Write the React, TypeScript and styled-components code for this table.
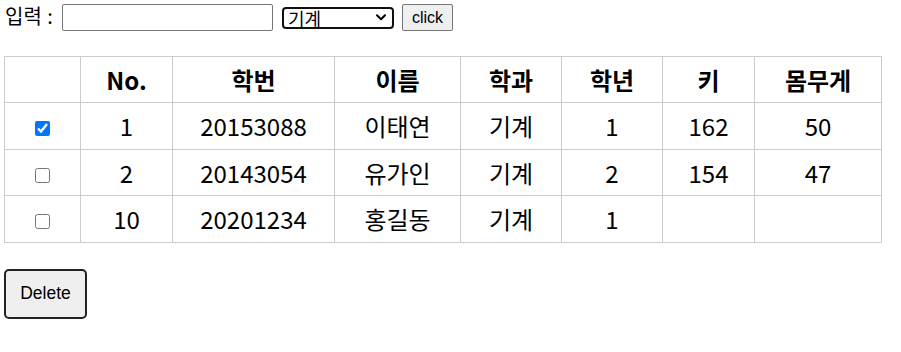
import React, { useState } from "react";
import styled, { createGlobalStyle } from "styled-components";

const Global = createGlobalStyle`
  html, body { margin: 0; padding: 0; background: #fff; }
  body { font-family: "Liberation Sans", "Noto Sans CJK KR", sans-serif; color: #000; }
`;

const Page = styled.div`
  padding: 4px 4px;
  width: 877px;
`;

const Toolbar = styled.div`
  display: flex;
  align-items: center;
  height: 27px;
  font-size: 16px;
`;

const Label = styled.span`
  font-family: "Noto Sans CJK KR", sans-serif;
  font-size: 20px;
  line-height: 24px;
  padding-left: 1px;
  width: 57px;
  flex: none;
  white-space: pre;
  margin-top: -3px;
  word-spacing: 1px;
`;

const TextInput = styled.input`
  box-sizing: border-box;
  width: 211px;
  height: 27px;
  border: 1px solid #767676;
  border-radius: 2px;
  padding: 1px 2px;
  font-size: 16px;
  margin: 0 9px 0 0;
`;

const SelectWrap = styled.div`
  position: relative;
  width: 112px;
  height: 22px;
  margin: 0 8px 0 0;
`;

const Select = styled.select`
  appearance: none;
  -webkit-appearance: none;
  box-sizing: border-box;
  width: 112px;
  height: 22px;
  border: 2px solid #101010;
  border-radius: 4px;
  font-family: "Noto Sans CJK KR", sans-serif;
  font-size: 18px;
  line-height: 18px;
  padding: 0 20px 0 4px;
  margin: 0;
  background: #fff;
  color: #000;
  outline: none;
`;

const Chevron = styled.svg`
  position: absolute;
  right: 8px;
  top: 7px;
  width: 10px;
  height: 7px;
  pointer-events: none;
`;

const Button = styled.button`
  box-sizing: border-box;
  height: 27px;
  width: 51px;
  border: 1px solid #767676;
  border-radius: 2px;
  background: #efefef;
  font-family: "Liberation Sans", sans-serif;
  font-size: 16px;
  padding: 0;
  color: #000;
`;

const Table = styled.table`
  margin-top: 25px;
  border-collapse: collapse;
  width: 877px;
  table-layout: fixed;
  font-family: "Noto Sans CJK KR", sans-serif;
  font-size: 24px;
`;

const Th = styled.th`
  border: 1px solid #ccc;
  height: 45px;
  padding: 0;
  font-weight: 700;
  text-align: center;
`;

const Td = styled.td`
  border: 1px solid #ccc;
  height: 45.5px;
  padding: 0;
  text-align: center;
`;

const Check = styled.input`
  width: 15px;
  height: 15px;
  margin: -2px 0 0 0;
  vertical-align: middle;
`;

const DeleteButton = styled.button`
  margin-top: 26px;
  box-sizing: border-box;
  width: 83px;
  height: 50px;
  border: 2px solid #222;
  border-radius: 5px;
  background: #efefef;
  font-family: "Liberation Sans", sans-serif;
  font-size: 17.5px;
  color: #000;
  padding: 0;
  display: block;
`;

const widths = [76, 92, 162, 126, 101, 101, 92, 127];
const headers = ["", "No.", "학번", "이름", "학과", "학년", "키", "몸무게"];
const rows = [
  { checked: true, no: "1", id: "20153088", name: "이태연", dept: "기계", year: "1", h: "162", w: "50" },
  { checked: false, no: "2", id: "20143054", name: "유가인", dept: "기계", year: "2", h: "154", w: "47" },
  { checked: false, no: "10", id: "20201234", name: "홍길동", dept: "기계", year: "1", h: "", w: "" },
];

export default function App() {
  const [checks, setChecks] = useState(rows.map((r) => r.checked));
  return (
    <Page>
      <Global />
      <Toolbar>
        <Label>입력 :</Label>
        <TextInput type="text" />
        <SelectWrap>
          <Select defaultValue="기계">
            <option>기계</option>
            <option>전자</option>
            <option>컴퓨터</option>
          </Select>
          <Chevron viewBox="0 0 10 7">
            <path d="M1 1.2 L5 5.2 L9 1.2" fill="none" stroke="#000" strokeWidth="2" strokeLinecap="round" strokeLinejoin="round" />
          </Chevron>
        </SelectWrap>
        <Button>click</Button>
      </Toolbar>
      <Table>
        <colgroup>
          {widths.map((w, i) => (
            <col key={i} style={{ width: w }} />
          ))}
        </colgroup>
        <thead>
          <tr>
            {headers.map((h, i) => (
              <Th key={i}>{h}</Th>
            ))}
          </tr>
        </thead>
        <tbody>
          {rows.map((r, i) => (
            <tr key={i}>
              <Td>
                <Check
                  type="checkbox"
                  checked={checks[i]}
                  onChange={() => setChecks(checks.map((c, j) => (j === i ? !c : c)))}
                />
              </Td>
              <Td>{r.no}</Td>
              <Td>{r.id}</Td>
              <Td>{r.name}</Td>
              <Td>{r.dept}</Td>
              <Td>{r.year}</Td>
              <Td>{r.h}</Td>
              <Td>{r.w}</Td>
            </tr>
          ))}
        </tbody>
      </Table>
      <DeleteButton>Delete</DeleteButton>
    </Page>
  );
}
